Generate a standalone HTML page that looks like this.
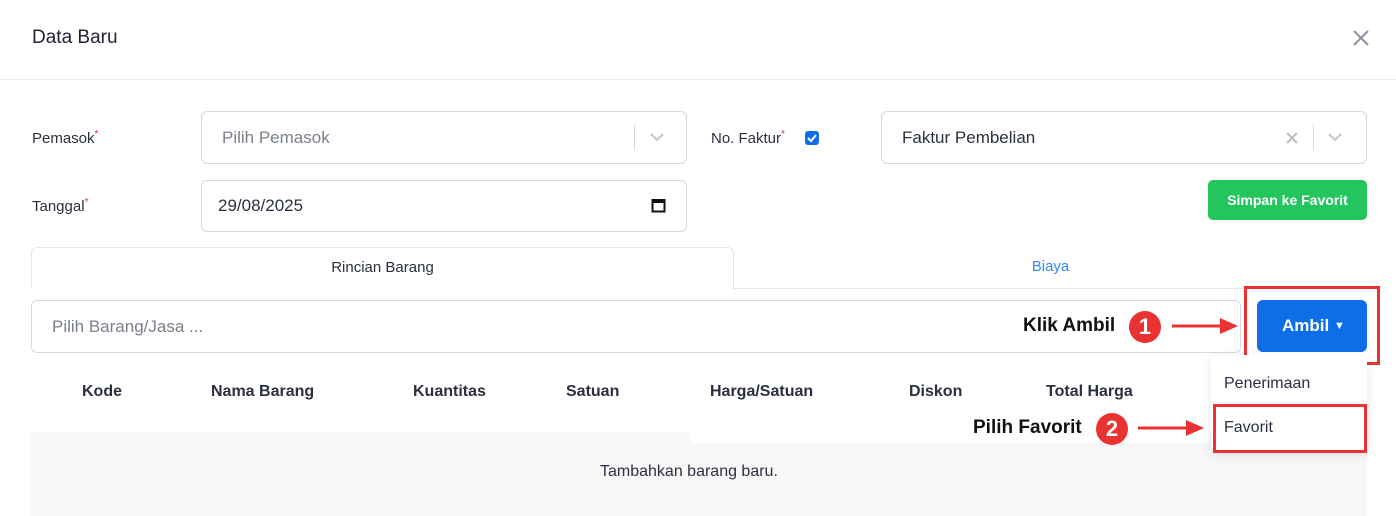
<!DOCTYPE html>
<html><head><meta charset="utf-8"><style>
*{box-sizing:border-box;margin:0;padding:0}
body{width:1396px;height:516px;overflow:hidden;background:#fff;font-family:"Liberation Sans",sans-serif;color:#2b3040;position:relative}
.a{position:absolute}
.inp{position:absolute;border:1px solid #d6d9de;border-radius:6px;background:#fff;font-size:17px;display:flex;align-items:center;padding-left:20px}
.lbl{position:absolute;font-size:15px;color:#2b3040}
.lbl sup{color:#e0245e;font-size:10px}
.th{position:absolute;top:383px;font-size:16px;font-weight:bold;color:#2b3040}
.circ{position:absolute;width:32px;height:32px;border-radius:50%;background:#ea3232;color:#fff;font-weight:bold;font-size:22px;text-align:center;line-height:32px}
.red{position:absolute;border:3px solid #ea3232}
</style></head><body>
<div class="a" style="left:32px;top:27px;font-size:19px;color:#1f2333">Data Baru</div>
<svg class="a" style="left:1352px;top:29px" width="18" height="18"><path d="M2 2L16 16M16 2L2 16" stroke="#8a93a3" stroke-width="2"/></svg>
<div class="a" style="left:0;top:79px;width:1396px;height:1px;background:#eceef1"></div>

<div class="lbl" style="left:32px;top:129px">Pemasok<sup>*</sup></div>
<div class="inp" style="left:201px;top:111px;width:486px;height:53px;color:#7a808c">Pilih Pemasok</div>
<div class="a" style="left:634px;top:125px;width:1px;height:25px;background:#d6d9de"></div>
<svg class="a" style="left:649px;top:132px" width="16" height="10"><path d="M2 2l6 6 6-6" stroke="#c0c4cc" stroke-width="2" fill="none"/></svg>

<div class="lbl" style="left:711px;top:129px">No. Faktur<sup>*</sup></div>
<div class="a" style="left:805px;top:131px;width:14px;height:14px;background:#0d6ee8;border-radius:3px"><svg width="14" height="14"><path d="M3 7l3 3 5-6" stroke="#fff" stroke-width="2" fill="none"/></svg></div>
<div class="inp" style="left:881px;top:111px;width:486px;height:53px;color:#2b3040">Faktur Pembelian</div>
<svg class="a" style="left:1286px;top:132px" width="12" height="12"><path d="M1 1L11 11M11 1L1 11" stroke="#b8bcc4" stroke-width="2"/></svg>
<div class="a" style="left:1313px;top:125px;width:1px;height:25px;background:#d6d9de"></div>
<svg class="a" style="left:1327px;top:132px" width="16" height="10"><path d="M2 2l6 6 6-6" stroke="#c0c4cc" stroke-width="2" fill="none"/></svg>

<div class="lbl" style="left:32px;top:197px">Tanggal<sup>*</sup></div>
<div class="inp" style="left:201px;top:180px;width:486px;height:52px;padding-left:16px;color:#2b3040">29/08/2025</div>
<svg class="a" style="left:651px;top:197px" width="15" height="16"><rect x="1.5" y="3" width="12" height="11.5" fill="none" stroke="#111" stroke-width="2"/><rect x="1.5" y="3" width="12" height="3" fill="#111"/></svg>

<div class="a" style="left:1208px;top:180px;width:159px;height:40px;background:#22c55e;border-radius:5px;color:#fff;font-size:14px;font-weight:bold;text-align:center;line-height:40px">Simpan ke Favorit</div>

<div class="a" style="left:31px;top:247px;width:703px;height:42px;border:1px solid #e4e6ea;border-bottom:none;border-radius:6px 6px 0 0;font-size:15px;text-align:center;line-height:40px">Rincian Barang</div>
<div class="a" style="left:734px;top:288px;width:633px;height:1px;background:#e4e6ea"></div>
<div class="a" style="left:734px;top:258px;width:633px;text-align:center;font-size:15px;color:#2f8cf3">Biaya</div>

<div class="inp" style="left:31px;top:300px;width:1210px;height:53px;color:#7a808c">Pilih Barang/Jasa ...</div>
<div class="a" style="left:1023px;top:315px;font-size:19px;font-weight:bold;color:#111">Klik Ambil</div>
<div class="circ" style="left:1129px;top:311px">1</div>
<svg class="a" style="left:1170px;top:314px" width="72" height="24"><path d="M2 12H52" stroke="#ea3232" stroke-width="3"/><path d="M50 4L68 12L50 20Z" fill="#ea3232"/></svg>

<div class="red" style="left:1244px;top:286px;width:136px;height:79px"></div>
<div class="a" style="left:1257px;top:300px;width:110px;height:52px;background:#0d6ee8;border-radius:6px;color:#fff;font-size:17px;font-weight:bold;line-height:52px;padding-left:25px">Ambil <span style="font-size:11px;vertical-align:2px">▼</span></div>

<div class="th" style="left:82px">Kode</div>
<div class="th" style="left:211px">Nama Barang</div>
<div class="th" style="left:413px">Kuantitas</div>
<div class="th" style="left:566px">Satuan</div>
<div class="th" style="left:710px">Harga/Satuan</div>
<div class="th" style="left:909px">Diskon</div>
<div class="th" style="left:1046px">Total Harga</div>
<div class="a" style="left:31px;top:432px;width:1336px;height:84px;background:#f7f7f8"></div>
<div class="a" style="left:690px;top:407px;width:520px;height:36px;background:#fff"></div>
<div class="a" style="left:600px;top:463px;font-size:16px;color:#2b3040">Tambahkan barang baru.</div>

<div class="a" style="left:1211px;top:355px;width:156px;height:98px;background:#fff;border-radius:6px;box-shadow:0 2px 10px rgba(0,0,0,.1)"></div>
<div class="a" style="left:1224px;top:375px;font-size:16px;color:#2b3040">Penerimaan</div>
<div class="red" style="left:1213px;top:404px;width:154px;height:49px"></div>
<div class="a" style="left:1224px;top:419px;font-size:16px;color:#2b3040">Favorit</div>
<div class="a" style="left:973px;top:417px;font-size:19px;font-weight:bold;color:#111">Pilih Favorit</div>
<div class="circ" style="left:1096px;top:413px">2</div>
<svg class="a" style="left:1136px;top:416px" width="72" height="24"><path d="M2 12H52" stroke="#ea3232" stroke-width="3"/><path d="M50 4L68 12L50 20Z" fill="#ea3232"/></svg>
</body></html>
